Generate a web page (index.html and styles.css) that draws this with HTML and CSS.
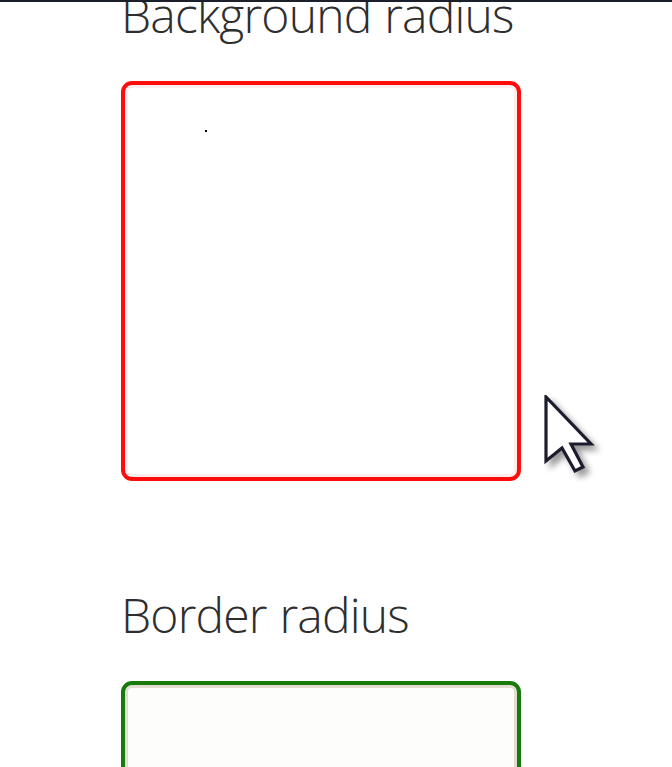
FILE: index.html
```html
<!DOCTYPE html>
<html lang="en">
<head>
<meta charset="utf-8">
<title>Radius demo</title>
<link rel="stylesheet" href="styles.css">
</head>
<body>
<div class="topline"></div>
<main class="page">
  <section class="demo">
    <h2 class="title first">Background radius</h2>
    <div class="box box-red"><span class="speck"></span></div>
  </section>
  <section class="demo">
    <h2 class="title second">Border radius</h2>
    <div class="box box-green"></div>
  </section>
</main>
<svg class="cursor" width="64" height="90" viewBox="0 0 64 90" aria-hidden="true">
  <defs>
    <filter id="sh" x="-30%" y="-30%" width="170%" height="170%">
      <feGaussianBlur in="SourceAlpha" stdDeviation="3"/>
      <feOffset dx="5" dy="5" result="b"/>
      <feComponentTransfer><feFuncA type="linear" slope="0.4"/></feComponentTransfer>
      <feMerge><feMergeNode/><feMergeNode in="SourceGraphic"/></feMerge>
    </filter>
  </defs>
  <polygon filter="url(#sh)" points="2,2 2,66 18,53 31,76 39,72 27,49 47,49" fill="#ffffff" stroke="#1d1e2f" stroke-width="3.2" stroke-linejoin="miter"/>
</svg>
</body>
</html>
```
FILE: styles.css
```css
html, body {
  margin: 0;
  padding: 0;
  background: #ffffff;
}
body {
  width: 672px;
  height: 767px;
  overflow: hidden;
  position: relative;
}
.topline {
  position: absolute;
  left: 0;
  top: 0;
  width: 100%;
  height: 2px;
  background: #1b1f2b;
  z-index: 5;
}
.page {
  padding-left: 121px;
}
.title {
  margin: 0;
  font-family: "Open Sans", "Noto Sans", sans-serif;
  font-weight: 300;
  font-size: 48px;
  line-height: 48px;
  color: #2e2e2e;
  letter-spacing: -0.8px;
  word-spacing: 1px;
  white-space: nowrap;
}
.title.first {
  margin-top: -9px;
}
.title.second {
  margin-top: 110px;
}
.box {
  box-sizing: border-box;
  width: 400px;
  height: 400px;
  margin-top: 42px;
  border-radius: 11px;
  position: relative;
}
.box-red {
  border: 4px solid #ff0c0c;
  box-shadow: inset 0 0 0 3px #fdeeee;
}
.box-green {
  border: 4px solid #187a0a;
  box-shadow: inset 0 0 0 3px #e3ddd1;
  background: #fdfdfb;
}
.speck {
  position: absolute;
  left: 80px;
  top: 45px;
  width: 2px;
  height: 2px;
  background: #000;
}
.cursor {
  position: absolute;
  left: 544px;
  top: 395px;
}
```
